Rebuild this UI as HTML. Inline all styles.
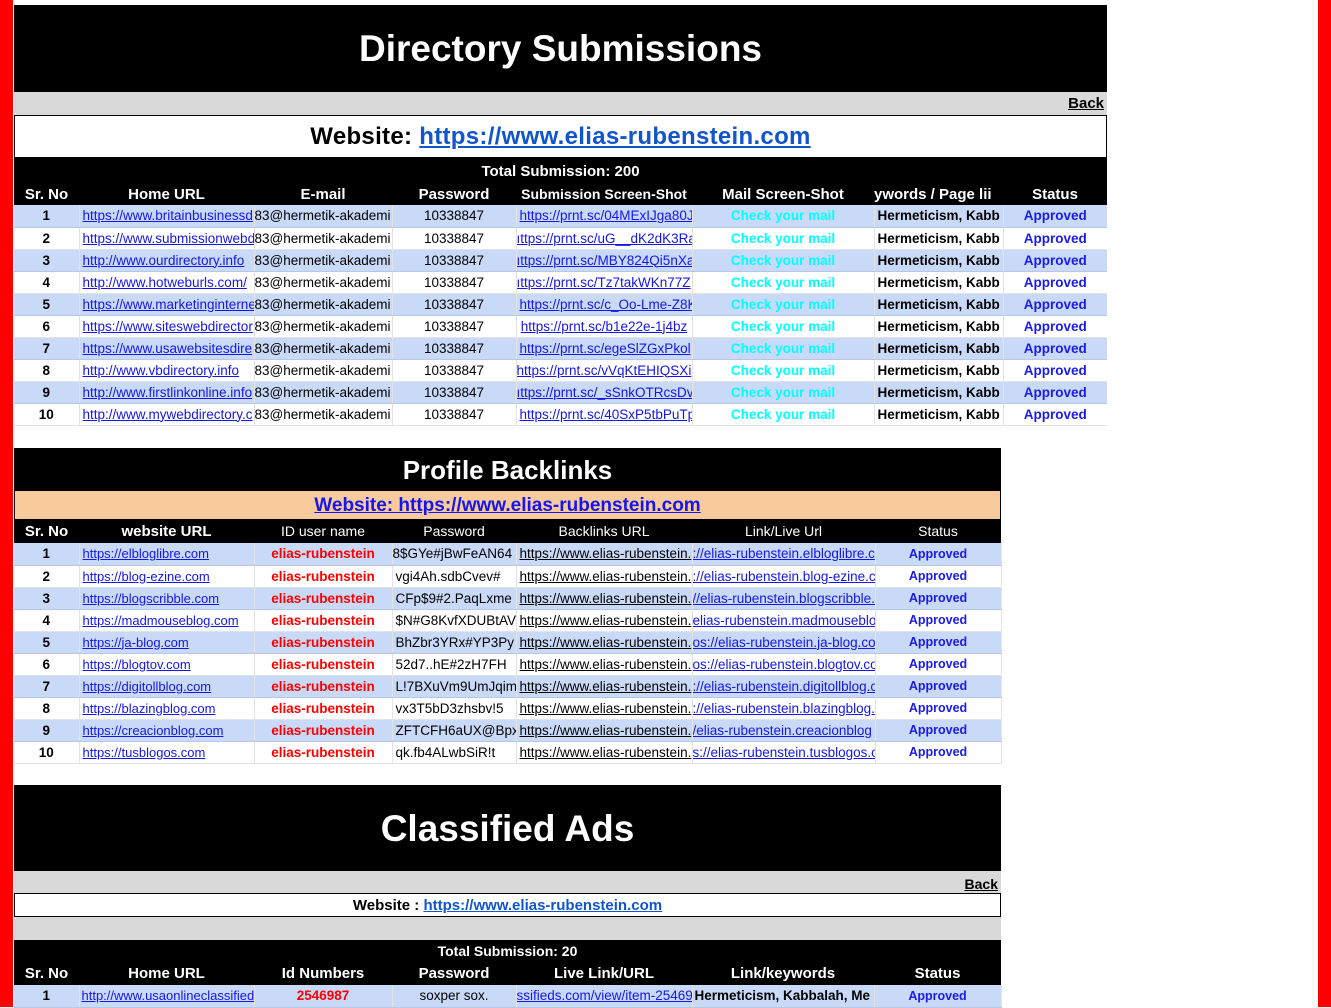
<!DOCTYPE html>
<html><head><meta charset="utf-8"><style>
*{margin:0;padding:0;box-sizing:border-box}
body{width:1331px;height:1007px;position:relative;background:#fff;font-family:"Liberation Sans",Arial,sans-serif;overflow:hidden}
.rl{position:absolute;left:0;top:0;width:13px;height:1007px;background:#f00}
.rr{position:absolute;left:1318px;top:0;width:13px;height:1007px;background:#f00}
.abs{position:absolute;left:14px}
.blk{background:#000;color:#fff;text-align:center;font-weight:bold}
.gray{background:#d9d9d9;text-align:right;font-weight:bold;font-size:15px;padding-right:3px}
.gray u{color:#000}
table{border-collapse:collapse;table-layout:fixed;position:absolute;left:14px}
td,th{height:22px;white-space:nowrap;overflow:hidden;padding:0 3px;font-size:13.5px;border-right:1px solid #e3e3e3}
th{background:#000;color:#fff;font-size:15px;border:none}
tr.b td{background:#c9daf8;border-bottom:1px solid #b7c7e6}
tr.w td{border-bottom:1px solid #e3e3e3}
.c{text-align:center}
.bold{font-weight:bold}
.lk{color:#1515ee;text-decoration:underline}
.lk2{color:#000;text-decoration:underline}
.cy{color:#00ffff;font-weight:bold;text-align:center}
.ap{color:#1a1aee;font-weight:bold}
.red{color:#f00;font-weight:bold;text-align:center}
.s1 td:last-child{text-align:center;border-right:none}
</style></head><body>
<div class="rl"></div><div class="rr"></div>

<div class="abs blk" style="top:5px;width:1093px;height:87px;font-size:37px;line-height:87px">Directory Submissions</div>
<div class="abs gray" style="top:92px;width:1093px;height:23px;line-height:23px"><u>Back</u></div>
<div class="abs" style="top:115px;width:1093px;height:43px;border:1px solid #000;text-align:center;font-size:24px;font-weight:bold;line-height:41px;letter-spacing:0.3px">Website: <span style="color:#1155cc;text-decoration:underline">https://www.elias-rubenstein.com</span></div>
<div class="abs blk" style="top:158px;width:1093px;height:25px;font-size:15px;line-height:27px">Total Submission: 200</div>
<table class="s1" style="top:183px;width:1093px">
<colgroup><col style="width:65px"><col style="width:175px"><col style="width:138px"><col style="width:124px"><col style="width:176px"><col style="width:182px"><col style="width:129px"><col style="width:104px"></colgroup>
<tr><th>Sr. No</th><th>Home URL</th><th>E-mail</th><th>Password</th><th style="font-size:14px">Submission Screen-Shot</th><th>Mail Screen-Shot</th><th style="text-align:left;padding:0">ywords / Page lii</th><th>Status</th></tr>
<tr class="b"><td class="c bold">1</td><td class="lk">https://www.britainbusinessd</td><td style="padding:0">83@hermetik-akademi</td><td class="c">10338847</td><td class="lk">https://prnt.sc/04MExIJga80J</td><td class="cy">Check your mail</td><td class="bold">Hermeticism, Kabb</td><td class="ap">Approved</td></tr>
<tr class="w"><td class="c bold">2</td><td class="lk">https://www.submissionwebd</td><td style="padding:0">83@hermetik-akademi</td><td class="c">10338847</td><td class="lk" style="padding:0">ıttps://prnt.sc/uG__dK2dK3Ra</td><td class="cy">Check your mail</td><td class="bold">Hermeticism, Kabb</td><td class="ap">Approved</td></tr>
<tr class="b"><td class="c bold">3</td><td class="lk">http://www.ourdirectory.info</td><td style="padding:0">83@hermetik-akademi</td><td class="c">10338847</td><td class="lk" style="padding:0">ıttps://prnt.sc/MBY824Qi5nXa</td><td class="cy">Check your mail</td><td class="bold">Hermeticism, Kabb</td><td class="ap">Approved</td></tr>
<tr class="w"><td class="c bold">4</td><td class="lk">http://www.hotweburls.com/</td><td style="padding:0">83@hermetik-akademi</td><td class="c">10338847</td><td class="lk" style="padding:0">ıttps://prnt.sc/Tz7takWKn77Z</td><td class="cy">Check your mail</td><td class="bold">Hermeticism, Kabb</td><td class="ap">Approved</td></tr>
<tr class="b"><td class="c bold">5</td><td class="lk">https://www.marketinginterne</td><td style="padding:0">83@hermetik-akademi</td><td class="c">10338847</td><td class="lk">https://prnt.sc/c_Oo-Lme-Z8K</td><td class="cy">Check your mail</td><td class="bold">Hermeticism, Kabb</td><td class="ap">Approved</td></tr>
<tr class="w"><td class="c bold">6</td><td class="lk">https://www.siteswebdirector</td><td style="padding:0">83@hermetik-akademi</td><td class="c">10338847</td><td class="lk c">https://prnt.sc/b1e22e-1j4bz</td><td class="cy">Check your mail</td><td class="bold">Hermeticism, Kabb</td><td class="ap">Approved</td></tr>
<tr class="b"><td class="c bold">7</td><td class="lk">https://www.usawebsitesdire</td><td style="padding:0">83@hermetik-akademi</td><td class="c">10338847</td><td class="lk">https://prnt.sc/egeSlZGxPkol</td><td class="cy">Check your mail</td><td class="bold">Hermeticism, Kabb</td><td class="ap">Approved</td></tr>
<tr class="w"><td class="c bold">8</td><td class="lk">http://www.vbdirectory.info</td><td style="padding:0">83@hermetik-akademi</td><td class="c">10338847</td><td class="lk" style="padding:0">https://prnt.sc/vVqKtEHIQSXi</td><td class="cy">Check your mail</td><td class="bold">Hermeticism, Kabb</td><td class="ap">Approved</td></tr>
<tr class="b"><td class="c bold">9</td><td class="lk">http://www.firstlinkonline.info</td><td style="padding:0">83@hermetik-akademi</td><td class="c">10338847</td><td class="lk" style="padding:0">ıttps://prnt.sc/_sSnkOTRcsDv</td><td class="cy">Check your mail</td><td class="bold">Hermeticism, Kabb</td><td class="ap">Approved</td></tr>
<tr class="w"><td class="c bold">10</td><td class="lk">http://www.mywebdirectory.c</td><td style="padding:0">83@hermetik-akademi</td><td class="c">10338847</td><td class="lk">https://prnt.sc/40SxP5tbPuTp</td><td class="cy">Check your mail</td><td class="bold">Hermeticism, Kabb</td><td class="ap">Approved</td></tr>
</table>

<div class="abs blk" style="top:448px;width:987px;height:43px;font-size:26px;line-height:45px">Profile Backlinks</div>
<div class="abs" style="top:491px;width:987px;height:28px;background:#f9cb9c;text-align:center;font-size:19px;font-weight:bold;line-height:30px;border:1px solid #000;border-top:none;border-bottom:none"><span style="color:#1515ee;text-decoration:underline">Website: https://www.elias-rubenstein.com</span></div>
<table style="top:519px;width:987px">
<colgroup><col style="width:65px"><col style="width:175px"><col style="width:138px"><col style="width:124px"><col style="width:176px"><col style="width:183px"><col style="width:126px"></colgroup>
<tr><th style="height:24px">Sr. No</th><th>website URL</th><th style="font-size:14px;font-weight:normal">ID user name</th><th style="font-size:14px;font-weight:normal">Password</th><th style="font-size:14px;font-weight:normal">Backlinks URL</th><th style="font-size:14px;font-weight:normal">Link/Live Url</th><th style="font-size:14px;font-weight:normal">Status</th></tr>
<tr class="b"><td class="c bold">1</td><td class="lk" style="font-size:13px">https://elbloglibre.com</td><td class="red">elias-rubenstein</td><td style="padding:0">8$GYe#jBwFeAN64</td><td class="lk2">https://www.elias-rubenstein.</td><td class="lk" style="padding:0">://elias-rubenstein.elbloglibre.c</td><td class="ap c" style="font-size:12.5px">Approved</td></tr>
<tr class="w"><td class="c bold">2</td><td class="lk" style="font-size:13px">https://blog-ezine.com</td><td class="red">elias-rubenstein</td><td>vgi4Ah.sdbCvev#</td><td class="lk2">https://www.elias-rubenstein.</td><td class="lk" style="padding:0">://elias-rubenstein.blog-ezine.c</td><td class="ap c" style="font-size:12.5px">Approved</td></tr>
<tr class="b"><td class="c bold">3</td><td class="lk" style="font-size:13px">https://blogscribble.com</td><td class="red">elias-rubenstein</td><td>CFp$9#2.PaqLxme</td><td class="lk2">https://www.elias-rubenstein.</td><td class="lk" style="padding:0">//elias-rubenstein.blogscribble.</td><td class="ap c" style="font-size:12.5px">Approved</td></tr>
<tr class="w"><td class="c bold">4</td><td class="lk" style="font-size:13px">https://madmouseblog.com</td><td class="red">elias-rubenstein</td><td>$N#G8KvfXDUBtAV</td><td class="lk2">https://www.elias-rubenstein.</td><td class="lk" style="padding:0">elias-rubenstein.madmouseblo</td><td class="ap c" style="font-size:12.5px">Approved</td></tr>
<tr class="b"><td class="c bold">5</td><td class="lk" style="font-size:13px">https://ja-blog.com</td><td class="red">elias-rubenstein</td><td>BhZbr3YRx#YP3Py</td><td class="lk2">https://www.elias-rubenstein.</td><td class="lk" style="padding:0">os://elias-rubenstein.ja-blog.co</td><td class="ap c" style="font-size:12.5px">Approved</td></tr>
<tr class="w"><td class="c bold">6</td><td class="lk" style="font-size:13px">https://blogtov.com</td><td class="red">elias-rubenstein</td><td>52d7..hE#2zH7FH</td><td class="lk2">https://www.elias-rubenstein.</td><td class="lk" style="padding:0">os://elias-rubenstein.blogtov.co</td><td class="ap c" style="font-size:12.5px">Approved</td></tr>
<tr class="b"><td class="c bold">7</td><td class="lk" style="font-size:13px">https://digitollblog.com</td><td class="red">elias-rubenstein</td><td>L!7BXuVm9UmJqim</td><td class="lk2">https://www.elias-rubenstein.</td><td class="lk" style="padding:0">://elias-rubenstein.digitollblog.c</td><td class="ap c" style="font-size:12.5px">Approved</td></tr>
<tr class="w"><td class="c bold">8</td><td class="lk" style="font-size:13px">https://blazingblog.com</td><td class="red">elias-rubenstein</td><td>vx3T5bD3zhsbv!5</td><td class="lk2">https://www.elias-rubenstein.</td><td class="lk" style="padding:0">://elias-rubenstein.blazingblog.</td><td class="ap c" style="font-size:12.5px">Approved</td></tr>
<tr class="b"><td class="c bold">9</td><td class="lk" style="font-size:13px">https://creacionblog.com</td><td class="red">elias-rubenstein</td><td>ZFTCFH6aUX@Bpx</td><td class="lk2">https://www.elias-rubenstein.</td><td class="lk" style="padding:0">/elias-rubenstein.creacionblog</td><td class="ap c" style="font-size:12.5px">Approved</td></tr>
<tr class="w"><td class="c bold">10</td><td class="lk" style="font-size:13px">https://tusblogos.com</td><td class="red">elias-rubenstein</td><td>qk.fb4ALwbSiR!t</td><td class="lk2">https://www.elias-rubenstein.</td><td class="lk" style="padding:0">s://elias-rubenstein.tusblogos.c</td><td class="ap c" style="font-size:12.5px">Approved</td></tr>
</table>

<div class="abs blk" style="top:785px;width:987px;height:85px;font-size:37px;line-height:88px">Classified Ads</div>
<div class="abs gray" style="top:870px;width:987px;height:23px;line-height:26px;font-size:14px;border-top:1px solid #000"><u>Back</u></div>
<div class="abs" style="top:893px;width:987px;height:24px;border:1px solid #000;text-align:center;font-size:15px;font-weight:bold;line-height:23px">Website : <span style="color:#1155cc;text-decoration:underline">https://www.elias-rubenstein.com</span></div>
<div class="abs" style="top:917px;width:987px;height:23px;background:#d9d9d9"></div>
<div class="abs blk" style="top:940px;width:987px;height:22px;font-size:14px;line-height:22px">Total Submission: 20</div>
<table style="top:962px;width:987px">
<colgroup><col style="width:65px"><col style="width:175px"><col style="width:138px"><col style="width:124px"><col style="width:176px"><col style="width:182px"><col style="width:127px"></colgroup>
<tr><th style="height:23px">Sr. No</th><th>Home URL</th><th>Id Numbers</th><th>Password</th><th>Live Link/URL</th><th>Link/keywords</th><th>Status</th></tr>
<tr class="b"><td class="c bold">1</td><td class="lk" style="font-size:13px;padding:0 2px">http://www.usaonlineclassified</td><td class="red">2546987</td><td class="c">soxper sox.</td><td class="lk" style="padding:0">ssifieds.com/view/item-25469</td><td class="bold" style="padding:0 2px">Hermeticism, Kabbalah, Me</td><td class="ap c" style="font-size:12.5px">Approved</td></tr>
</table>
</body></html>
